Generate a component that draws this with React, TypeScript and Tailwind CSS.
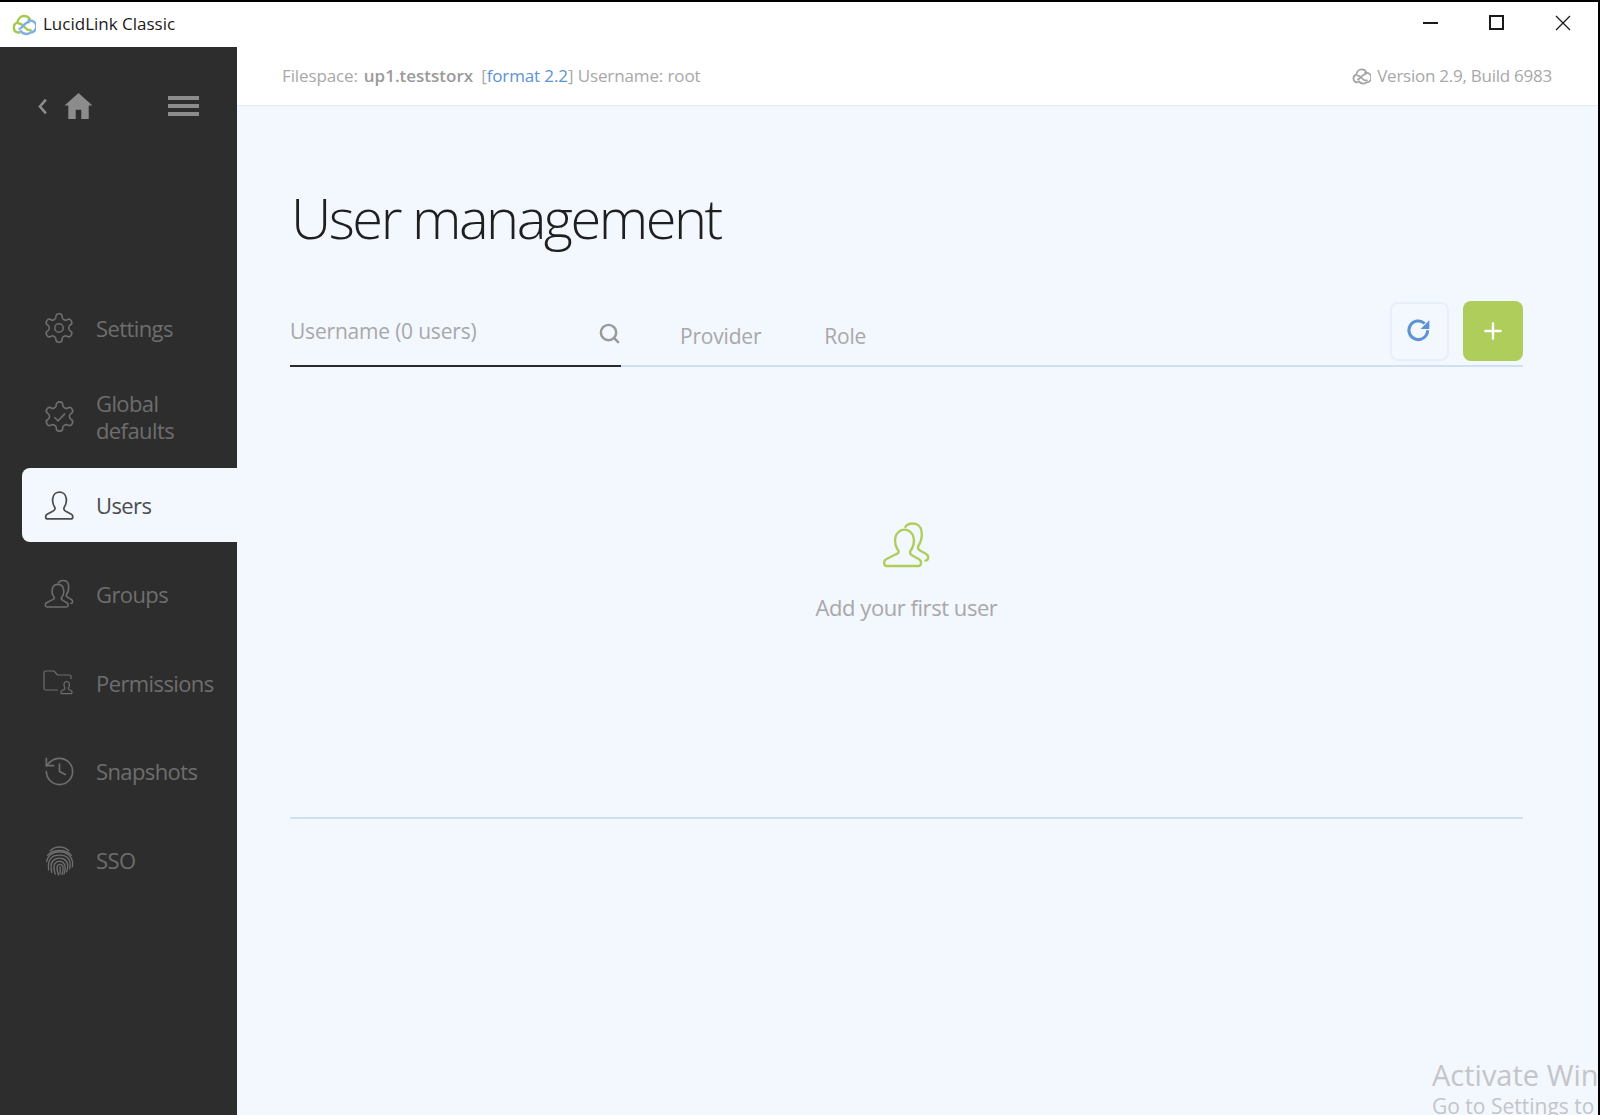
import { History, Plus, Search } from 'lucide-react';

const segoe = "font-['Open_Sans','Noto_Sans',sans-serif]";

const GEAR =
  'M12.22 2h-.44a2 2 0 0 0-2 2v.18a2 2 0 0 1-1 1.73l-.43.25a2 2 0 0 1-2 0l-.15-.08a2 2 0 0 0-2.73.73l-.22.38a2 2 0 0 0 .73 2.73l.15.1a2 2 0 0 1 1 1.72v.51a2 2 0 0 1-1 1.74l-.15.09a2 2 0 0 0-.73 2.73l.22.38a2 2 0 0 0 2.73.73l.15-.08a2 2 0 0 1 2 0l.43.25a2 2 0 0 1 1 1.73V20a2 2 0 0 0 2 2h.44a2 2 0 0 0 2-2v-.18a2 2 0 0 1 1-1.73l.43-.25a2 2 0 0 1 2 0l.15.08a2 2 0 0 0 2.73-.73l.22-.39a2 2 0 0 0-.73-2.73l-.15-.08a2 2 0 0 1-1-1.74v-.5a2 2 0 0 1 1-1.74l.15-.09a2 2 0 0 0 .73-2.73l-.22-.38a2 2 0 0 0-2.73-.73l-.15.08a2 2 0 0 1-2 0l-.43-.25a2 2 0 0 1-1-1.73V4a2 2 0 0 0-2-2z';

const PERSON =
  'M10.5 17C8.5 14 8 11 8.5 8 9 4 12 2 15 2s6 2 6.500 6c.5 3 0 6-2 9-.7 1.500-.2 2.500 1.500 3.500l5.500 3c2 1.200 1.800 4.500-.5 4.500H3.500c-2.300 0-2.500-3.300-.5-4.500l5.500-3c1.700-1 2.700-2 2-3.500z';

const LogoMark = ({ gray = false }: { gray?: boolean }) => (
  <svg viewBox="0 0 24 24" className="h-full w-full" fill="none" strokeWidth={gray ? 2.2 : 2.4}>
    <path d="M8 19.500H6.500a5 5 0 0 1-1-9.800C6 5.500 9 3 12 3c3.500 0 6 2.400 6.500 5.500" stroke={gray ? '#a3a3a3' : '#a4c94f'} />
    <path d="M6 10.500c3-.5 5 1.500 7 4 2 2.300 4 3.500 6.500 2" stroke={gray ? '#a3a3a3' : '#a4c94f'} />
    <path d="M15.500 7.500h2.500a5 5 0 0 1 .5 12c-1 1-2.500 1.500-4 1.500-3 0-5-1.500-6.500-3.500" stroke={gray ? '#a3a3a3' : '#7fb0e0'} />
    <path d="M18 9c-3-.5-5 1.500-7 4-1.500 2-3 3-4.500 3" stroke={gray ? '#a3a3a3' : '#7fb0e0'} />
  </svg>
);

const SettingsIcon = () => (
  <svg viewBox="0 0 24 24" fill="none" stroke="currentColor" strokeWidth={1.1} className="h-[34px] w-[34px]">
    <path d={GEAR} />
    <circle cx="12" cy="12" r="3" />
  </svg>
);

const GlobalIcon = () => (
  <svg viewBox="0 0 24 24" fill="none" stroke="currentColor" strokeWidth={1.1} className="h-[35px] w-[35px]">
    <path d={GEAR} />
    <path d="M8.500 12.500l2.500 2.500 4.800-5" />
  </svg>
);

const UserIcon = () => (
  <svg viewBox="0 0 30 30" fill="none" stroke="currentColor" strokeWidth={1.7} className="h-[31px] w-[31px]">
    <path d={PERSON} />
  </svg>
);

const GroupIcon = ({ className = 'h-[31px] w-[31px]', width = 1.5 }: { className?: string; width?: number }) => (
  <svg viewBox="0 0 30 30" fill="none" stroke="currentColor" strokeWidth={width} strokeLinecap="round" className={className}>
    <path d="M10 18c-2-2.500-2.500-5-2-8 .5-3 3-4.800 5.500-4.800s5 1.800 5.500 4.800c.5 3 0 5.500-2 8-.6 1.200 0 2 1.200 2.700l4 2.300c1.800 1 1.600 4-.5 4H3c-2.100 0-2.300-3-.5-4l4.300-2.300C8.500 20 10.500 19.500 10 18z" />
    <path d="M14 3.500C15 2 17 1.500 18.500 1.500c3 0 5 2.200 5.300 5 .3 3-.3 6-2 8.500-.6 1.200-.2 2 1.200 2.800l3.500 2c1.800 1 1.500 4-.5 4" />
  </svg>
);

const PermissionsIcon = () => (
  <svg viewBox="0 0 32 26" fill="none" stroke="currentColor" strokeWidth={1.2} className="h-[26px] w-[32px]">
    <path d="M15 20H2.500a1.500 1.500 0 0 1-1.500-1.500V2.500A1.500 1.500 0 0 1 2.500 1H11l3.500 4H26.500a1.500 1.500 0 0 1 1.500 1.500V9" />
    <path d="M22 18c-1-1.300-1.300-2.500-1-4 .3-1.500 1.500-2.500 2.700-2.500s2.400 1 2.700 2.500c.3 1.500 0 2.700-1 4-.3.700 0 1 .6 1.400l2.300 1.300c1 .5 1 3-.3 3H19c-1.300 0-1.300-2.500-.3-3l2.300-1.300c.6-.4 1.300-.7 1-1.400z" />
  </svg>
);

const FingerprintIcon = () => (
  <svg viewBox="0 0 30 30" fill="none" stroke="currentColor" strokeWidth={1.3} strokeLinecap="round" className="h-[31px] w-[31px]">
    <path d="M6 5.500C11 .8 19 .8 24 5.500" />
    <path d="M3.500 10C9 3.800 21 3.800 26.500 10" />
    <path d="M2.500 16C4 9 10 6.500 15 6.500S26 9 27.500 16c.3 2 .3 3 0 5" />
    <path d="M4.500 24C4 20 4 16 6.500 13 10 8.800 20 8.800 23.500 13c2 2.500 2 6 1.500 10" />
    <path d="M7.500 26.500C6.500 22 6.500 18 8.500 15.500c3-3.700 10-3.700 13 0 2 2.500 1.500 7 .5 10.500" />
    <path d="M11 28c-1.500-3.500-2-7-.5-10 2-3 7-3 9 0 1.500 2.500 1 6.500 0 10" />
    <path d="M14 29c-1-3-1.800-6.500-1-9 .8-1.700 4-1.700 5 0 .8 2 .5 5-.5 8.500" />
    <path d="M15.500 21c.2 2.500.5 4.500 0 7" />
  </svg>
);

const navItems = [
  { label: ['Settings'], icon: <SettingsIcon /> },
  { label: ['Global', 'defaults'], icon: <GlobalIcon /> },
  { label: ['Users'], icon: <UserIcon />, active: true },
  { label: ['Groups'], icon: <GroupIcon /> },
  { label: ['Permissions'], icon: <PermissionsIcon /> },
  { label: ['Snapshots'], icon: <History className="h-[35px] w-[35px]" strokeWidth={1.15} /> },
  { label: ['SSO'], icon: <FingerprintIcon /> },
];

const Sidebar = () => (
  <aside className="flex w-[237px] shrink-0 flex-col bg-[#2d2d2d] pt-[44px]">
    <div className="flex h-[30px] items-center pl-[37px] pr-[38px] text-[#8c8c8c]">
      <svg viewBox="0 0 12 20" fill="none" stroke="currentColor" strokeWidth={3} className="h-[17px] w-[11px]">
        <path d="M10 2L3 10l7 8" />
      </svg>
      <svg viewBox="0 0 30 28" fill="currentColor" className="ml-[16px] h-[26px] w-[29px]">
        <path d="M15 0L30 13.500H26V28H18V18H12V28H4V13.500H0z" />
      </svg>
      <div className="ml-auto flex flex-col gap-[4px]">
        <div className="h-[4px] w-[31px] bg-[#8c8c8c]" />
        <div className="h-[4px] w-[31px] bg-[#8c8c8c]" />
        <div className="h-[4px] w-[31px] bg-[#8c8c8c]" />
      </div>
    </div>
    <nav className="mt-[162.600px] flex flex-col">
      {navItems.map((item) => (
        <div key={item.label[0]} className="flex h-[88.750px] items-center">
          <div
            className={
              item.active
                ? 'ml-[22px] flex h-[74px] flex-1 items-center rounded-l-[8px] bg-[#f3f7fe] text-[#4d4d4d]'
                : 'ml-[22px] flex h-[74px] flex-1 items-center text-[#6e6e6e]'
            }
          >
            <div className="flex w-[74px] justify-center">{item.icon}</div>
            <div className="text-[22px] leading-[26.500px] tracking-[-0.6px]">
              {item.label.map((line) => (
                <div key={line}>{line}</div>
              ))}
            </div>
          </div>
        </div>
      ))}
    </nav>
  </aside>
);

const Header = () => (
  <header className="flex h-[59px] shrink-0 items-center justify-between border-b border-[#e2ecf8] bg-white pl-[45px] pr-[46px] text-[17px] tracking-[-0.12px] text-[#a8a8a8]">
    <div className="flex items-center">
      <span>Filespace:</span>
      <span className="ml-[6px] font-semibold tracking-[0px] text-[#9a9a9a]">up1.teststorx</span>
      <span className="ml-[8px]">
        [<span className="text-[#5b93d3]">format 2.2</span>] Username: root
      </span>
    </div>
    <div className="flex items-center gap-[6px] tracking-[-0.25px]">
      <div className="h-[19px] w-[19px]">
        <LogoMark gray />
      </div>
      <span>Version 2.9, Build 6983</span>
    </div>
  </header>
);

const Toolbar = () => (
  <div className="flex h-[67px] items-stretch border-b-2 border-[#cfe0f2]">
    <div className="-mb-[2px] flex w-[331px] items-start justify-between border-b-2 border-[#2b2b2b] pt-[16px] text-[21px] tracking-[-0.2px] text-[#a8a8a8]">
      <span>Username (0 users)</span>
      <Search className="mt-[6px] h-[23px] w-[23px] text-[#9a9a9a]" strokeWidth={2.6} />
    </div>
    <div className="ml-[59px] mt-[21px] text-[21px] tracking-[-0.2px] text-[#a8a8a8]">Provider</div>
    <div className="ml-[63px] mt-[21px] text-[21px] tracking-[-0.2px] text-[#a8a8a8]">Role</div>
    <div className="ml-auto flex items-start gap-[14px]">
      <button className="mt-[2px] flex h-[59px] w-[59px] items-center justify-center rounded-[8px] border-2 border-[#e6effb]">
        <svg viewBox="1.500 1.500 24 24" fill="none" className="h-[28px] w-[28px] text-[#5b93d3]">
          <path d="M20 12a8 8 0 1 1-2.500-5.800" stroke="currentColor" strokeWidth={2.6} />
          <path d="M21.500 3.500V11H14z" fill="currentColor" />
        </svg>
      </button>
      <button className="mt-[1px] flex h-[60px] w-[60px] items-center justify-center rounded-[8px] bg-[#afcd5a]">
        <Plus className="h-[26px] w-[26px] text-white" strokeWidth={2.2} />
      </button>
    </div>
  </div>
);

export default function App() {
  return (
    <div className={`relative flex h-[1115px] w-[1600px] flex-col overflow-hidden border-r-2 border-t-2 border-black bg-white ${segoe}`}>
      <div className="flex h-[45px] shrink-0 items-center bg-white pl-[12px]">
        <div className="h-[24px] w-[24px]">
          <LogoMark />
        </div>
        <span className="ml-[7px] -translate-y-[1px] text-[17px] text-[#1a1a1a]">LucidLink Classic</span>
        <div className="ml-auto flex -translate-y-[2px] items-center gap-[51px] pr-[27px] text-[#1a1a1a]">
          <div className="h-[2px] w-[15px] bg-[#1a1a1a]" />
          <div className="h-[15px] w-[15px] border-2 border-[#1a1a1a]" />
          <svg viewBox="0 0 16 16" stroke="currentColor" strokeWidth={1.3} className="h-[16px] w-[16px]">
            <path d="M1 1l14 14M15 1L1 15" />
          </svg>
        </div>
      </div>
      <div className="flex min-h-0 flex-1">
        <Sidebar />
        <main className="flex min-w-0 flex-1 flex-col bg-[#f3f7fe]">
          <Header />
          <div className="flex flex-1 flex-col pl-[53px] pr-[75px]">
            <h1 className="ml-[1px] mt-[72px] text-[56px] font-light leading-[78px] tracking-[-2.500px] text-[#1f1f1f]">
              User management
            </h1>
            <div className="mt-[44px]">
              <Toolbar />
            </div>
            <div className="flex h-[452px] flex-col items-center justify-start border-b-2 border-[#cfe0f2] pt-[154px]">
              <GroupIcon className="h-[50px] w-[50px] text-[#afcd5a]" width={1.4} />
              <div className="mt-[20px] text-[22px] tracking-[-0.45px] text-[#a8a8a8]">Add your first user</div>
            </div>
          </div>
        </main>
      </div>
      <div className="absolute left-[1432px] top-[1055px] whitespace-nowrap text-[#c4c5c8]">
        <div className="text-[29px] leading-[36px]">Activate Windows</div>
        <div className="text-[21px] leading-[27px]">Go to Settings to activate Windows.</div>
      </div>
    </div>
  );
}
